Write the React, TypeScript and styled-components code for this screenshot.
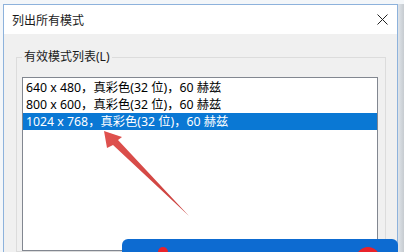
import styled, { createGlobalStyle } from "styled-components";

const GlobalStyle = createGlobalStyle`
  html, body {
    margin: 0;
    padding: 0;
  }
  body {
    font-family: "Noto Sans", "Noto Sans CJK SC", sans-serif;
    font-size: 12px;
    color: #000;
  }
`;

const Page = styled.div`
  position: relative;
  width: 404px;
  height: 252px;
  overflow: hidden;
  display: flex;
  padding-top: 4px;
  box-sizing: border-box;
  background: #f3f6f9;
`;

const LeftEdge = styled.div`
  width: 3px;
  flex-shrink: 0;
`;

const RightEdge = styled.div`
  flex: 1;
  background: linear-gradient(to right, #dfe4e9, #c6cbd0);
`;

const Dialog = styled.div`
  width: 395px;
  flex-shrink: 0;
  display: flex;
  flex-direction: column;
  border: 1px solid #8db2dc;
  border-bottom: none;
  box-sizing: border-box;
  background: #f0f0f0;
`;

const TitleBar = styled.div`
  height: 29px;
  display: flex;
  align-items: center;
  justify-content: space-between;
  padding: 0 9px 0 8px;
  background: #fff;
  font-size: 12px;
  color: #1a1a1a;
`;

const CloseButton = styled.div`
  width: 12px;
  height: 12px;
  display: flex;
  align-items: center;
  justify-content: center;
`;

const Body = styled.div`
  flex: 1;
  background: #f0f0f0;
  display: flex;
  flex-direction: column;
`;

const GroupBox = styled.fieldset`
  margin: 15px 11px 0 12px;
  padding: 12px 7px 0 5px;
  border: 1px solid #dcdcdc;
  min-width: 0;
`;

const GroupLabel = styled.legend`
  padding: 0 2px;
  line-height: 16px;
  font-size: 12px;
  color: #1a1a1a;
`;

const ListBox = styled.div`
  height: 174px;
  box-sizing: border-box;
  border: 1px solid #828790;
  background: #fff;
  padding-top: 1px;
`;

const Row = styled.div<{ $selected?: boolean }>`
  height: 17px;
  line-height: 17px;
  padding-left: 3px;
  font-size: 12.3px;
  white-space: nowrap;
  background: ${(p) => (p.$selected ? "#0a78d4" : "transparent")};
  color: ${(p) => (p.$selected ? "#fff" : "#000")};
`;

const Pointer = styled.svg`
  position: absolute;
  left: 0;
  top: 0;
  pointer-events: none;
`;

const Banner = styled.div`
  position: absolute;
  left: 122px;
  top: 239px;
  width: 276px;
  height: 24px;
  background: #0d6bd1;
  border-radius: 6px 6px 0 0;
`;

const RedDot = styled.div<{ $left: number; $size: number }>`
  position: absolute;
  left: ${(p) => p.$left}px;
  top: 8px;
  width: ${(p) => p.$size}px;
  height: ${(p) => p.$size}px;
  border-radius: 50%;
  background: #e8232b;
`;

const modes = [
  "640 x 480，真彩色(32 位)，60 赫兹",
  "800 x 600，真彩色(32 位)，60 赫兹",
  "1024 x 768，真彩色(32 位)，60 赫兹",
];

export default function App() {
  return (
    <>
      <GlobalStyle />
      <Page>
        <LeftEdge />
        <Dialog>
          <TitleBar>
            <span>列出所有模式</span>
            <CloseButton>
              <svg width="11" height="11" viewBox="0 0 11 11">
                <path d="M0.5 0.5 L10.5 10.5 M10.5 0.5 L0.5 10.5" stroke="#222" strokeWidth="1" />
              </svg>
            </CloseButton>
          </TitleBar>
          <Body>
            <GroupBox>
              <GroupLabel>有效模式列表(L)</GroupLabel>
              <ListBox>
                {modes.map((m, i) => (
                  <Row key={m} $selected={i === 2}>
                    {m}
                  </Row>
                ))}
              </ListBox>
            </GroupBox>
          </Body>
        </Dialog>
        <RightEdge />
        <Pointer width="404" height="252" viewBox="0 0 404 252">
          <defs>
            <linearGradient id="arrowFill" x1="0" y1="0" x2="1" y2="1">
              <stop offset="0" stopColor="#e0524f" />
              <stop offset="1" stopColor="#c9403d" />
            </linearGradient>
          </defs>
          <polygon
            points="104,131 122,137 118,140 189,216 113,145 107,148"
            fill="url(#arrowFill)"
          />
        </Pointer>
        <Banner>
          <RedDot $left={36} $size={10} />
          <RedDot $left={234} $size={24} />
        </Banner>
      </Page>
    </>
  );
}
